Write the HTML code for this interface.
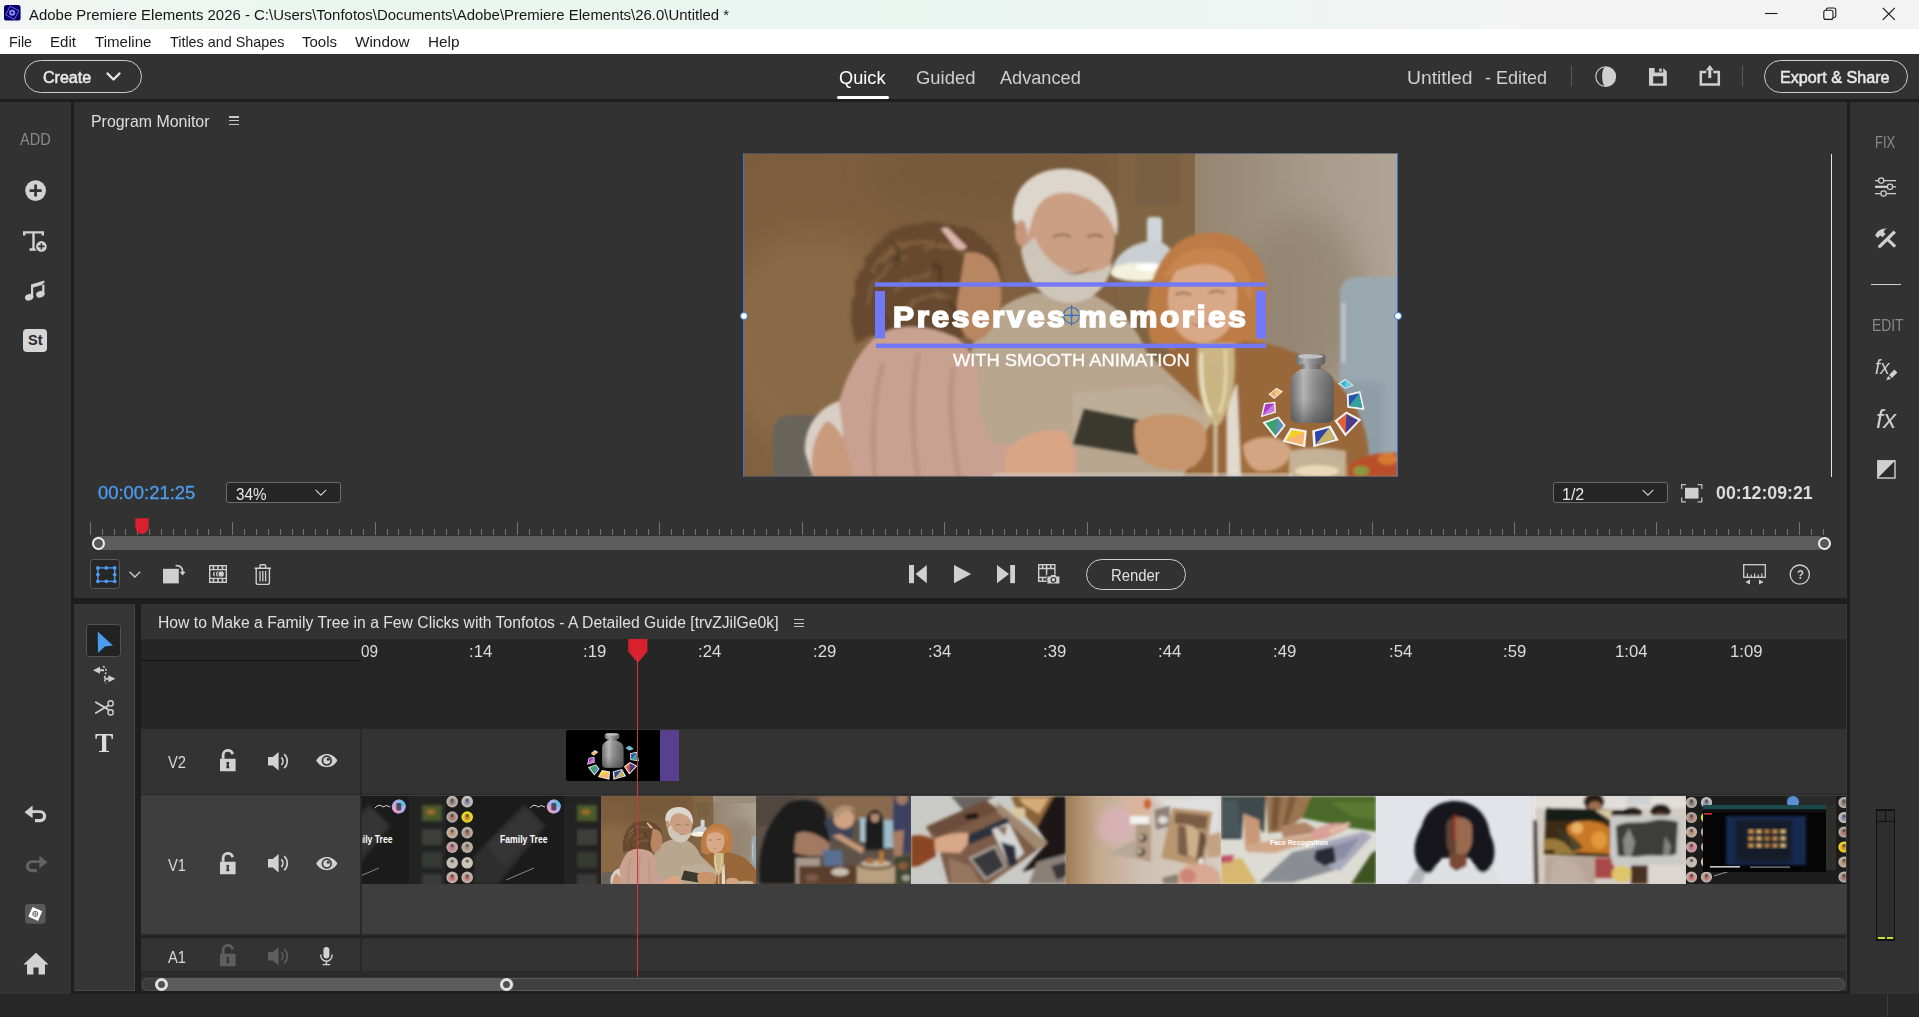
<!DOCTYPE html>
<html><head><meta charset="utf-8"><title>Adobe Premiere Elements 2026</title>
<style>
html,body{margin:0;padding:0;overflow:hidden;}
body{width:1919px;height:1017px;overflow:hidden;background:#323232;position:relative;font-family:"Liberation Sans",sans-serif;}
body div, body svg, body span.t{position:absolute;}
span.t{white-space:pre;transform-origin:0 0;display:block;}
svg{overflow:visible;}
.blur div{position:absolute;}
</style></head><body>
<div style="left:0px;top:0px;width:1919px;height:29px;background:linear-gradient(90deg,#f2f5f3 0%,#ecf6f1 14%,#e9f5f0 42%,#edf5f2 62%,#f3f3f3 80%);"></div>
<div style="left:0px;top:29px;width:1919px;height:25px;background:#ffffff;"></div>
<div style="left:0px;top:54px;width:1919px;height:45px;background:#323232;"></div>
<div style="left:0px;top:99px;width:1919px;height:3px;background:#1e1e1e;"></div>
<div style="left:0px;top:102px;width:71px;height:891px;background:#323232;"></div>
<div style="left:71px;top:102px;width:3px;height:891px;background:#1e1e1e;"></div>
<div style="left:74px;top:102px;width:1773px;height:496px;background:#323232;"></div>
<div style="left:74px;top:598px;width:1773px;height:6px;background:#1e1e1e;"></div>
<div style="left:1847px;top:102px;width:3px;height:891px;background:#1e1e1e;"></div>
<div style="left:1850px;top:102px;width:69px;height:891px;background:#323232;"></div>
<div style="left:74px;top:604px;width:61px;height:387.2px;background:#353535;box-sizing:border-box;border:1px solid #464646;border-top:none;border-left:none;"></div>
<div style="left:135px;top:604px;width:6px;height:389px;background:#1e1e1e;"></div>
<div style="left:141px;top:604px;width:1705px;height:35px;background:#323232;"></div>
<div style="left:141px;top:639px;width:1705px;height:90px;background:#262626;"></div>
<div style="left:141px;top:660px;width:220px;height:1px;background:#161616;"></div>
<div style="left:141px;top:729px;width:1705px;height:64.5px;background:#333333;"></div>
<div style="left:141px;top:793.5px;width:1705px;height:1.6px;background:#282828;"></div>
<div style="left:141px;top:795px;width:1705px;height:139px;background:#3e3e3e;"></div>
<div style="left:141px;top:934px;width:1705px;height:5px;background:#2a2a2a;"></div>
<div style="left:141px;top:936px;width:1705px;height:1px;background:#1f1f1f;"></div>
<div style="left:141px;top:939.5px;width:1705px;height:31.7px;background:#333333;"></div>
<div style="left:141px;top:971.2px;width:1705px;height:6px;background:#2b2b2b;"></div>
<div style="left:360px;top:729px;width:2px;height:242px;background:#282828;"></div>
<div style="left:1846px;top:604px;width:1px;height:389px;background:#3a3a3a;"></div>
<div style="left:142px;top:978px;width:1703px;height:13.3px;background:#404040;border-radius:7px;box-sizing:border-box;border:1px solid #5a5a5a;"></div>
<div style="left:142px;top:978px;width:372px;height:13.3px;background:#5c5c5c;border-radius:7px;"></div>
<div style="left:142px;top:978px;width:18px;height:13.3px;background:#3a3a3a;border-radius:7px 0 0 7px;box-sizing:border-box;border:1px solid #4a4a4a;border-right:none;"></div>
<div style="left:155.0px;top:978.2px;width:13px;height:13px;background:#505050;border-radius:50%;box-sizing:border-box;border:3px solid #e2e2e2;"></div>
<div style="left:500.0px;top:978.2px;width:13px;height:13px;background:#505050;border-radius:50%;box-sizing:border-box;border:3px solid #e2e2e2;"></div>
<div style="left:71px;top:991.2px;width:1779px;height:2.6px;background:#1e1e1e;"></div>
<div style="left:0px;top:993.6px;width:1919px;height:23.4px;background:#272727;"></div>
<div style="left:1887px;top:994px;width:1px;height:23px;background:#3c3c3c;"></div>
<svg style="left:3.75px;top:5px;" width="16.6" height="15.6" viewBox="0 0 16.6 15.6"><rect width="16.6" height="15.6" rx="2.6" fill="#08006c"/><rect x="3.4" y="2.9" width="9.8" height="9.8" fill="none" stroke="#7676ee" stroke-width="0.8" transform="rotate(27 8.3 7.8)"/><circle cx="8.2" cy="7.7" r="3" fill="#8f8ffa"/><path d="M7.3 6.2 L9.9 7.6 L7.4 9.2Z" fill="#08006c"/></svg>
<svg style="left:1765px;top:6px;" width="140" height="16" viewBox="0 0 140 16"><path d="M0 7.5H12.5" stroke="#1a1a1a" stroke-width="1.1"/><rect x="58.8" y="4.2" width="9.2" height="9.2" rx="2" fill="none" stroke="#1a1a1a" stroke-width="1.1"/><path d="M61.3 4.2V3.8a1.8 1.8 0 0 1 1.8-1.8h5.7a2 2 0 0 1 2 2v5.7a1.8 1.8 0 0 1-1.8 1.8H68" fill="none" stroke="#1a1a1a" stroke-width="1.1"/><path d="M117.8 1.8L129.8 13.8M129.8 1.8L117.8 13.8" stroke="#1a1a1a" stroke-width="1.2"/></svg>
<div style="left:24px;top:60px;width:118px;height:33px;background:transparent;box-sizing:border-box;border:1.3px solid #cdcdcd;border-radius:17px;"></div>
<svg style="left:106px;top:72px;" width="16" height="10" viewBox="0 0 16 10"><path d="M1.5 1.5L7.5 7.5L13.5 1.5" fill="none" stroke="#e6e6e6" stroke-width="2.4" stroke-linecap="round" stroke-linejoin="round"/></svg>
<div style="left:837px;top:96px;width:52px;height:3px;background:#ffffff;border-radius:1.5px;"></div>
<div style="left:1571px;top:66px;width:1.3px;height:20px;background:#5a5a5a;"></div>
<div style="left:1742px;top:66px;width:1.3px;height:20px;background:#5a5a5a;"></div>
<svg style="left:1594px;top:65px;" width="24" height="24" viewBox="0 0 24 24"><circle cx="11.7" cy="11.6" r="9.9" fill="none" stroke="#cfcfcf" stroke-width="1.1"/><path d="M11.7 1.7A9.9 9.9 0 0 1 11.7 21.5A3.6 9.9 0 0 1 11.7 1.7Z" fill="#cfcfcf"/></svg>
<svg style="left:1648.8px;top:67.9px;" width="18" height="18" viewBox="0 0 18 18"><path fill-rule="evenodd" d="M0 0H14.2L17.8 3.6V17.8H0Z M5.6 0V4.6H14.2V0Z M4.2 8.2V15.6H14.2V8.2Z" fill="#cfcfcf"/><rect x="10.2" y="0.6" width="2.6" height="3" fill="#cfcfcf"/></svg>
<svg style="left:1699px;top:64px;" width="22" height="22" viewBox="0 0 22 22"><path d="M7.3 8.1H1.8V20.4H19.8V8.1H14.3" fill="none" stroke="#cfcfcf" stroke-width="2.5"/><path d="M10.8 1L14.8 6.3H12.3V14H9.3V6.3H6.8Z" fill="#cfcfcf"/></svg>
<div style="left:1763.8px;top:60px;width:144.4px;height:33px;background:transparent;box-sizing:border-box;border:1.3px solid #cdcdcd;border-radius:17px;"></div>
<div style="left:229px;top:116.4px;width:9.6px;height:1.4px;background:#c8c8c8;"></div>
<div style="left:229px;top:120px;width:9.6px;height:1.4px;background:#c8c8c8;"></div>
<div style="left:229px;top:123.6px;width:9.6px;height:1.4px;background:#c8c8c8;"></div>
<div style="left:794px;top:619px;width:9.6px;height:1.4px;background:#c8c8c8;"></div>
<div style="left:794px;top:622.5px;width:9.6px;height:1.4px;background:#c8c8c8;"></div>
<div style="left:794px;top:626px;width:9.6px;height:1.4px;background:#c8c8c8;"></div>
<svg style="left:25px;top:180px;" width="21" height="21" viewBox="0 0 21 21"><circle cx="10.6" cy="10.6" r="10.4" fill="#d2d2d2"/><path d="M10.6 4.6V16.6M4.6 10.6H16.6" stroke="#323232" stroke-width="2.7"/></svg>
<svg style="left:23px;top:231px;" width="26" height="22" viewBox="0 0 26 22"><path d="M1.2 4.6V1.4H19.8V4.6M10.5 1.4V18.3M6.5 18.5H14.5" fill="none" stroke="#d2d2d2" stroke-width="2.4"/><circle cx="18.4" cy="15.4" r="6.6" fill="#323232"/><circle cx="18.4" cy="15.4" r="5.3" fill="#d2d2d2"/><path d="M18.4 12.2V18.6M15.2 15.4H21.6" stroke="#323232" stroke-width="1.6"/></svg>
<svg style="left:24px;top:279px;" width="22" height="23" viewBox="0 0 22 23"><path d="M7.2 5.2L20.2 1.6V15.6" fill="none" stroke="#d2d2d2" stroke-width="0"/><path d="M7 5.4L20.4 1.4V5.3L9.2 8.6V18.2H7Z M18.2 5V15.2H20.4V3.5Z" fill="#d2d2d2"/><ellipse cx="5.2" cy="18.3" rx="4.3" ry="3.2" transform="rotate(-20 5.2 18.3)" fill="#d2d2d2"/><ellipse cx="16.4" cy="15.2" rx="4.3" ry="3.2" transform="rotate(-20 16.4 15.2)" fill="#d2d2d2"/></svg>
<div style="left:23px;top:329px;width:24px;height:22.7px;background:#d6d6d6;border-radius:4px;"></div>
<svg style="left:24px;top:805px;" width="24" height="18" viewBox="0 0 24 18"><path d="M0.5 7.2L8.6 0.6V5.3H16.2a6 6 0 0 1 0 12H11V14H16a3 3 0 0 0 0-6H8.6V13.2Z" fill="#d2d2d2"/></svg>
<svg style="left:24px;top:855px;transform:scaleX(-1);" width="24" height="18" viewBox="0 0 24 18"><path d="M0.5 7.2L8.6 0.6V5.3H16.2a6 6 0 0 1 0 12H11V14H16a3 3 0 0 0 0-6H8.6V13.2Z" fill="#626262"/></svg>
<svg style="left:25.3px;top:903.6px;" width="20.6" height="19.8" viewBox="0 0 20.6 19.8"><rect width="20.6" height="19.8" rx="3.2" fill="#595959"/><rect x="5" y="4.6" width="10.6" height="10.6" fill="#ffffff" transform="rotate(24 10.3 9.9)"/><circle cx="10.3" cy="9.9" r="2.6" fill="none" stroke="#555" stroke-width="0.9"/><path d="M10.3 7.6V12.2M8 9.9H12.6" stroke="#555" stroke-width="0.7"/></svg>
<svg style="left:23px;top:952px;" width="26" height="24" viewBox="0 0 26 24"><path d="M13 0.8L25.6 12.6H22V22.6H15.6V15.4H10.4V22.6H4V12.6H0.4Z" fill="#d2d2d2"/></svg>
<svg style="left:1874px;top:176px;" width="24" height="22" viewBox="0 0 24 22"><g stroke="#cfcfcf" stroke-width="1.25" fill="#323232"><path d="M1 4.6H22M1 10.8H22M1 17.5H22"/><path d="M1 10.8H13" stroke-width="2.2"/><circle cx="7.2" cy="4.6" r="2.7"/><circle cx="16" cy="10.8" r="2.7"/><circle cx="9.6" cy="17.5" r="2.7"/></g></svg>
<svg style="left:1873px;top:226px;" width="26" height="24" viewBox="0 0 26 24"><path d="M5.6 19.2L20.6 4.4L23 6.8L8 21.6L4 22.8Z" fill="#cfcfcf"/><path d="M4.7 20.4L6.6 22.2L4 22.9Z" fill="#323232"/><path d="M13.6 14.4L15.8 12.2L23.2 19.6L21 21.8Z" fill="#cfcfcf"/><path d="M2.2 9.6C3.8 5.2 8.4 2 14 2.6C11.6 3.6 10.8 4.8 10.8 6.2L12.6 8L9.4 11.2L7.4 9.4L4.6 12Z" fill="#cfcfcf"/></svg>
<div style="left:1870.5px;top:284px;width:30.5px;height:1.2px;background:#cfcfcf;"></div>
<svg style="left:1884px;top:366px;" width="15" height="15" viewBox="0 0 15 15"><path d="M5 9L10.4 3.6L13.4 6.6L8 12Z" fill="#cfcfcf"/><path d="M4.2 9.9L7.1 12.8L1.8 14.6Z" fill="#cfcfcf"/><path d="M2.9 12.9L3.6 13.7L1.8 14.6Z" fill="#323232"/></svg>
<svg style="left:1877px;top:460px;" width="19" height="19" viewBox="0 0 19 19"><rect x="0.8" y="0.8" width="17.2" height="17.2" fill="#2a2a2a" stroke="#cfcfcf" stroke-width="1.4"/><path d="M0.8 0.8H18L0.8 18Z" fill="#cfcfcf"/></svg>
<div style="left:1831px;top:154px;width:1px;height:323px;background:#e4e4e4;"></div>
<div style="left:226px;top:482px;width:115px;height:21.2px;background:#252525;box-sizing:border-box;border:1px solid #6c6c6c;border-radius:3px;"></div>
<svg style="left:315.4px;top:488.6px;" width="13" height="8" viewBox="0 0 13 8"><path d="M0.6 0.8L5.9 6.1L11.2 0.8" fill="none" stroke="#d4d4d4" stroke-width="1.1"/></svg>
<div style="left:1553px;top:482px;width:114.5px;height:21.2px;background:#252525;box-sizing:border-box;border:1px solid #6c6c6c;border-radius:3px;"></div>
<svg style="left:1642.4px;top:488.6px;" width="13" height="8" viewBox="0 0 13 8"><path d="M0.6 0.8L5.9 6.1L11.2 0.8" fill="none" stroke="#d4d4d4" stroke-width="1.1"/></svg>
<svg style="left:1681px;top:483.6px;" width="22" height="19" viewBox="0 0 22 19"><path d="M0.7 5V0.7H5M16.5 0.7H20.8V5M20.8 13.5V17.8H16.5M5 17.8H0.7V13.5" fill="none" stroke="#bdbdbd" stroke-width="1.3"/><rect x="4" y="3.8" width="13.5" height="10.8" fill="#cfcfcf"/></svg>
<svg style="left:0;top:0" width="1919" height="540" fill="#747474" shape-rendering="crispEdges"><rect x="90" y="522" width="1" height="13" /><rect x="102" y="529" width="1" height="6" /><rect x="114" y="529" width="1" height="6" /><rect x="125" y="529" width="1" height="6" /><rect x="137" y="529" width="1" height="6" /><rect x="149" y="529" width="1" height="6" /><rect x="161" y="529" width="1" height="6" /><rect x="173" y="529" width="1" height="6" /><rect x="185" y="529" width="1" height="6" /><rect x="197" y="529" width="1" height="6" /><rect x="208" y="529" width="1" height="6" /><rect x="220" y="529" width="1" height="6" /><rect x="232" y="522" width="1" height="13" /><rect x="244" y="529" width="1" height="6" /><rect x="256" y="529" width="1" height="6" /><rect x="268" y="529" width="1" height="6" /><rect x="280" y="529" width="1" height="6" /><rect x="292" y="529" width="1" height="6" /><rect x="303" y="529" width="1" height="6" /><rect x="315" y="529" width="1" height="6" /><rect x="327" y="529" width="1" height="6" /><rect x="339" y="529" width="1" height="6" /><rect x="351" y="529" width="1" height="6" /><rect x="363" y="529" width="1" height="6" /><rect x="375" y="522" width="1" height="13" /><rect x="387" y="529" width="1" height="6" /><rect x="398" y="529" width="1" height="6" /><rect x="410" y="529" width="1" height="6" /><rect x="422" y="529" width="1" height="6" /><rect x="434" y="529" width="1" height="6" /><rect x="446" y="529" width="1" height="6" /><rect x="458" y="529" width="1" height="6" /><rect x="470" y="529" width="1" height="6" /><rect x="481" y="529" width="1" height="6" /><rect x="493" y="529" width="1" height="6" /><rect x="505" y="529" width="1" height="6" /><rect x="517" y="522" width="1" height="13" /><rect x="529" y="529" width="1" height="6" /><rect x="541" y="529" width="1" height="6" /><rect x="553" y="529" width="1" height="6" /><rect x="565" y="529" width="1" height="6" /><rect x="576" y="529" width="1" height="6" /><rect x="588" y="529" width="1" height="6" /><rect x="600" y="529" width="1" height="6" /><rect x="612" y="529" width="1" height="6" /><rect x="624" y="529" width="1" height="6" /><rect x="636" y="529" width="1" height="6" /><rect x="648" y="529" width="1" height="6" /><rect x="659" y="522" width="1" height="13" /><rect x="671" y="529" width="1" height="6" /><rect x="683" y="529" width="1" height="6" /><rect x="695" y="529" width="1" height="6" /><rect x="707" y="529" width="1" height="6" /><rect x="719" y="529" width="1" height="6" /><rect x="731" y="529" width="1" height="6" /><rect x="743" y="529" width="1" height="6" /><rect x="754" y="529" width="1" height="6" /><rect x="766" y="529" width="1" height="6" /><rect x="778" y="529" width="1" height="6" /><rect x="790" y="529" width="1" height="6" /><rect x="802" y="522" width="1" height="13" /><rect x="814" y="529" width="1" height="6" /><rect x="826" y="529" width="1" height="6" /><rect x="837" y="529" width="1" height="6" /><rect x="849" y="529" width="1" height="6" /><rect x="861" y="529" width="1" height="6" /><rect x="873" y="529" width="1" height="6" /><rect x="885" y="529" width="1" height="6" /><rect x="897" y="529" width="1" height="6" /><rect x="909" y="529" width="1" height="6" /><rect x="921" y="529" width="1" height="6" /><rect x="932" y="529" width="1" height="6" /><rect x="944" y="522" width="1" height="13" /><rect x="956" y="529" width="1" height="6" /><rect x="968" y="529" width="1" height="6" /><rect x="980" y="529" width="1" height="6" /><rect x="992" y="529" width="1" height="6" /><rect x="1004" y="529" width="1" height="6" /><rect x="1016" y="529" width="1" height="6" /><rect x="1027" y="529" width="1" height="6" /><rect x="1039" y="529" width="1" height="6" /><rect x="1051" y="529" width="1" height="6" /><rect x="1063" y="529" width="1" height="6" /><rect x="1075" y="529" width="1" height="6" /><rect x="1087" y="522" width="1" height="13" /><rect x="1099" y="529" width="1" height="6" /><rect x="1110" y="529" width="1" height="6" /><rect x="1122" y="529" width="1" height="6" /><rect x="1134" y="529" width="1" height="6" /><rect x="1146" y="529" width="1" height="6" /><rect x="1158" y="529" width="1" height="6" /><rect x="1170" y="529" width="1" height="6" /><rect x="1182" y="529" width="1" height="6" /><rect x="1194" y="529" width="1" height="6" /><rect x="1205" y="529" width="1" height="6" /><rect x="1217" y="529" width="1" height="6" /><rect x="1229" y="522" width="1" height="13" /><rect x="1241" y="529" width="1" height="6" /><rect x="1253" y="529" width="1" height="6" /><rect x="1265" y="529" width="1" height="6" /><rect x="1277" y="529" width="1" height="6" /><rect x="1288" y="529" width="1" height="6" /><rect x="1300" y="529" width="1" height="6" /><rect x="1312" y="529" width="1" height="6" /><rect x="1324" y="529" width="1" height="6" /><rect x="1336" y="529" width="1" height="6" /><rect x="1348" y="529" width="1" height="6" /><rect x="1360" y="529" width="1" height="6" /><rect x="1372" y="522" width="1" height="13" /><rect x="1383" y="529" width="1" height="6" /><rect x="1395" y="529" width="1" height="6" /><rect x="1407" y="529" width="1" height="6" /><rect x="1419" y="529" width="1" height="6" /><rect x="1431" y="529" width="1" height="6" /><rect x="1443" y="529" width="1" height="6" /><rect x="1455" y="529" width="1" height="6" /><rect x="1466" y="529" width="1" height="6" /><rect x="1478" y="529" width="1" height="6" /><rect x="1490" y="529" width="1" height="6" /><rect x="1502" y="529" width="1" height="6" /><rect x="1514" y="522" width="1" height="13" /><rect x="1526" y="529" width="1" height="6" /><rect x="1538" y="529" width="1" height="6" /><rect x="1550" y="529" width="1" height="6" /><rect x="1561" y="529" width="1" height="6" /><rect x="1573" y="529" width="1" height="6" /><rect x="1585" y="529" width="1" height="6" /><rect x="1597" y="529" width="1" height="6" /><rect x="1609" y="529" width="1" height="6" /><rect x="1621" y="529" width="1" height="6" /><rect x="1633" y="529" width="1" height="6" /><rect x="1645" y="529" width="1" height="6" /><rect x="1656" y="522" width="1" height="13" /><rect x="1668" y="529" width="1" height="6" /><rect x="1680" y="529" width="1" height="6" /><rect x="1692" y="529" width="1" height="6" /><rect x="1704" y="529" width="1" height="6" /><rect x="1716" y="529" width="1" height="6" /><rect x="1728" y="529" width="1" height="6" /><rect x="1739" y="529" width="1" height="6" /><rect x="1751" y="529" width="1" height="6" /><rect x="1763" y="529" width="1" height="6" /><rect x="1775" y="529" width="1" height="6" /><rect x="1787" y="529" width="1" height="6" /><rect x="1799" y="522" width="1" height="13" /><rect x="1811" y="529" width="1" height="6" /><rect x="1823" y="529" width="1" height="6" /></svg>
<div style="left:92px;top:536.4px;width:1733px;height:13.2px;background:#5d5d5d;border-radius:6.6px;"></div>
<div style="left:92.0px;top:536.5px;width:13px;height:13px;background:#585858;border-radius:50%;box-sizing:border-box;border:2.9px solid #efefef;"></div>
<div style="left:1818.0px;top:536.5px;width:13px;height:13px;background:#585858;border-radius:50%;box-sizing:border-box;border:2.9px solid #efefef;"></div>
<svg style="left:135px;top:518px;" width="15" height="17" viewBox="0 0 15 17"><path d="M0.3 0.2H13.7V8.6C13.7 12.6 10.6 16 7 16C3.4 16 0.3 12.6 0.3 8.6Z" fill="#d8202e"/></svg>
<div style="left:90.4px;top:559.3px;width:29.4px;height:29.4px;background:#272727;box-sizing:border-box;border:1px solid #5a5a5a;border-radius:3.5px;"></div>
<svg style="left:95.6px;top:566px;" width="21" height="18" viewBox="0 0 21 18"><rect x="1.9" y="1.9" width="16.8" height="13.4" fill="none" stroke="#4b9cf2" stroke-width="1.3"/><g fill="#4b9cf2"><circle cx="1.9" cy="1.9" r="1.9"/><circle cx="1.9" cy="8.6" r="1.9"/><circle cx="1.9" cy="15.3" r="1.9"/><circle cx="10.3" cy="1.9" r="1.9"/><circle cx="10.3" cy="15.3" r="1.9"/><circle cx="18.7" cy="1.9" r="1.9"/><circle cx="18.7" cy="8.6" r="1.9"/><circle cx="18.7" cy="15.3" r="1.9"/></g></svg>
<svg style="left:129px;top:571px;" width="13" height="8" viewBox="0 0 13 8"><path d="M0.6 0.8L5.9 6L11.2 0.8" fill="none" stroke="#cfcfcf" stroke-width="1.3"/></svg>
<svg style="left:163px;top:563px;" width="24" height="22" viewBox="0 0 24 22"><rect x="0" y="5.8" width="15.8" height="14.6" fill="#cfcfcf"/><path d="M12.6 2.6C17.6 2 20 5.4 19.8 9.6" fill="none" stroke="#cfcfcf" stroke-width="1.8"/><path d="M16.6 8.8H22.6L19.6 12.6Z" fill="#cfcfcf"/></svg>
<svg style="left:209px;top:565px;" width="18" height="18" viewBox="0 0 18 18"><rect x="0.7" y="0.7" width="16.6" height="16.6" fill="none" stroke="#cfcfcf" stroke-width="1.4"/><path d="M0.7 4.6H17.3M0.7 13.4H17.3" stroke="#cfcfcf" stroke-width="1.3"/><path d="M4.50 0.7V4.6M4.50 13.4V17.3" stroke="#cfcfcf" stroke-width="1.6"/><path d="M9.00 0.7V4.6M9.00 13.4V17.3" stroke="#cfcfcf" stroke-width="1.6"/><path d="M13.50 0.7V4.6M13.50 13.4V17.3" stroke="#cfcfcf" stroke-width="1.6"/><circle cx="12.2" cy="9" r="2.7" fill="#cfcfcf"/><path d="M8.6 6.6A3 3 0 0 0 8.6 11.4A4.4 4.4 0 0 1 8.6 6.6Z M5.4 6.9A3 3 0 0 0 5.4 11.1A4.4 4.4 0 0 1 5.4 6.9Z" fill="#cfcfcf" stroke="#cfcfcf" stroke-width="0.8"/></svg>
<svg style="left:254px;top:564px;" width="18" height="22" viewBox="0 0 18 22"><path d="M0.6 4.2H17M6 4V1.6Q6 0.8 6.8 0.8H10.8Q11.6 0.8 11.6 1.6V4" fill="none" stroke="#cfcfcf" stroke-width="1.4"/><path d="M2.2 4.4V18.4Q2.2 20.4 4.2 20.4H13.4Q15.4 20.4 15.4 18.4V4.4" fill="none" stroke="#cfcfcf" stroke-width="1.4"/><path d="M6 7V17.6M8.8 7V17.6M11.6 7V17.6" stroke="#cfcfcf" stroke-width="1.3"/></svg>
<svg style="left:909px;top:565px;" width="19" height="18.4" viewBox="0 0 19 18.4"><rect x="0" y="0" width="5" height="18.2" fill="#cfcfcf"/><path d="M6.6 9.1L17.8 0V18.2Z" fill="#cfcfcf"/></svg>
<svg style="left:953.8px;top:565.4px;" width="18" height="18.4" viewBox="0 0 18 18.4"><path d="M0 0L17.2 9.1L0 18.2Z" fill="#cfcfcf"/></svg>
<svg style="left:996.8px;top:565px;" width="19" height="18.4" viewBox="0 0 19 18.4"><rect x="13.2" y="0" width="4.8" height="18.2" fill="#cfcfcf"/><path d="M12 9.1L0 0V18.2Z" fill="#cfcfcf"/></svg>
<svg style="left:1038px;top:564.3px;" width="22" height="20" viewBox="0 0 22 20"><rect x="0.7" y="0.7" width="16.2" height="16.6" fill="none" stroke="#cfcfcf" stroke-width="1.4"/><path d="M0.7 4.4H17M0.7 13.6H17M4.6 0.7V4.4M8.6 0.7V17.3M12.8 0.7V4.4M4.6 13.6V17.3" stroke="#cfcfcf" stroke-width="1.5"/><rect x="8.4" y="10.6" width="13.6" height="9.6" fill="#323232"/><path d="M9.4 12.4H12.2L13.4 11H17.4L18.6 12.4H21.4V19.6H9.4Z" fill="#cfcfcf"/><circle cx="15.4" cy="15.8" r="2.3" fill="none" stroke="#323232" stroke-width="1.2"/></svg>
<div style="left:1086px;top:558.7px;width:100px;height:31.3px;background:transparent;box-sizing:border-box;border:1.3px solid #cdcdcd;border-radius:16px;"></div>
<svg style="left:1743px;top:564px;" width="24" height="21" viewBox="0 0 24 21"><rect x="0.7" y="0.7" width="21.6" height="12.6" fill="none" stroke="#cfcfcf" stroke-width="1.3"/><path d="M4.4 13V9.6M8.2 13V10.6M11.6 13V9.6M15.2 13V10.6M18.8 13V9.6" stroke="#cfcfcf" stroke-width="1.2"/><path d="M2.4 18L7 15.4V20.6Z M20.6 18L16 15.4V20.6Z" fill="#cfcfcf"/></svg>
<svg style="left:1789px;top:564px;" width="22" height="22" viewBox="0 0 22 22"><circle cx="10.8" cy="10.6" r="9.6" fill="none" stroke="#cfcfcf" stroke-width="1.3"/></svg>
<div style="left:86.4px;top:624.3px;width:34.4px;height:32.5px;background:#222222;box-sizing:border-box;border:1px solid #535353;border-radius:3.5px;"></div>
<svg style="left:96px;top:630px;" width="19" height="24" viewBox="0 0 19 24"><path d="M1.7 1.6L17 15.6L8.8 16.6L2 23Z" fill="#4a9cf0"/></svg>
<svg style="left:92px;top:664px;" width="25" height="21" viewBox="0 0 25 21"><path d="M1 6.3L8 2.8V5.3H12V7.3H8V9.8Z" fill="#cfcfcf"/><path d="M23.4 14.8L16.4 11.3V13.8H12.4V15.8H16.4V18.3Z" fill="#cfcfcf"/><path d="M11 2.4C14 3.6 14.6 7 13.4 10C12.2 13 12.4 17 14 19.6" fill="none" stroke="#cfcfcf" stroke-width="1.5" stroke-dasharray="2 1.6"/></svg>
<svg style="left:95px;top:699px;" width="20" height="18" viewBox="0 0 20 18"><path d="M0.8 3.2L13 10.4M0.8 14L13 6.8" stroke="#cfcfcf" stroke-width="1.8" stroke-linecap="round"/><circle cx="15.6" cy="4.4" r="2.6" fill="none" stroke="#cfcfcf" stroke-width="1.4"/><circle cx="15.6" cy="13.4" r="2.6" fill="none" stroke="#cfcfcf" stroke-width="1.4"/></svg>
<svg style="left:219.8px;top:749px;" width="17" height="23" viewBox="0 0 17 23"><path fill-rule="evenodd" d="M0 9.8H15.6V22.2H0Z M6.2 13.6A1.9 1.9 0 0 1 9.4 13.6L8.8 15.6L9.4 19.2H6.2L6.8 15.6Z" fill="#d2d2d2"/><path d="M3.1 9.8V6.4A4.8 4.8 0 0 1 12.6 5.2" fill="none" stroke="#d2d2d2" stroke-width="2.8"/></svg>
<svg style="left:268.4px;top:751.6px;" width="22" height="19" viewBox="0 0 22 19"><path d="M0 5H4.8L10.6 0V18.4L4.8 13.4H0Z" fill="#d2d2d2"/><path d="M13.4 5.4A5.6 5.6 0 0 1 13.4 13" fill="none" stroke="#d2d2d2" stroke-width="1.7"/><path d="M16.2 2.2A9.6 9.6 0 0 1 16.2 16.2" fill="none" stroke="#d2d2d2" stroke-width="1.7"/></svg>
<svg style="left:316px;top:753px;" width="22" height="16" viewBox="0 0 22 16"><path d="M0.2 7.6C5 -1.2 16.6 -1.2 21.4 7.6C16.6 16.4 5 16.4 0.2 7.6Z" fill="#d2d2d2"/><circle cx="10.8" cy="7.6" r="4.4" fill="none" stroke="#333333" stroke-width="1.7"/><circle cx="12.2" cy="6.2" r="1.5" fill="#333333"/></svg>
<svg style="left:219.8px;top:852px;" width="17" height="23" viewBox="0 0 17 23"><path fill-rule="evenodd" d="M0 9.8H15.6V22.2H0Z M6.2 13.6A1.9 1.9 0 0 1 9.4 13.6L8.8 15.6L9.4 19.2H6.2L6.8 15.6Z" fill="#d2d2d2"/><path d="M3.1 9.8V6.4A4.8 4.8 0 0 1 12.6 5.2" fill="none" stroke="#d2d2d2" stroke-width="2.8"/></svg>
<svg style="left:268.4px;top:854.4px;" width="22" height="19" viewBox="0 0 22 19"><path d="M0 5H4.8L10.6 0V18.4L4.8 13.4H0Z" fill="#d2d2d2"/><path d="M13.4 5.4A5.6 5.6 0 0 1 13.4 13" fill="none" stroke="#d2d2d2" stroke-width="1.7"/><path d="M16.2 2.2A9.6 9.6 0 0 1 16.2 16.2" fill="none" stroke="#d2d2d2" stroke-width="1.7"/></svg>
<svg style="left:316px;top:855.8px;" width="22" height="16" viewBox="0 0 22 16"><path d="M0.2 7.6C5 -1.2 16.6 -1.2 21.4 7.6C16.6 16.4 5 16.4 0.2 7.6Z" fill="#d2d2d2"/><circle cx="10.8" cy="7.6" r="4.4" fill="none" stroke="#3e3e3e" stroke-width="1.7"/><circle cx="12.2" cy="6.2" r="1.5" fill="#3e3e3e"/></svg>
<svg style="left:219.8px;top:944.4px;" width="17" height="23" viewBox="0 0 17 23"><path fill-rule="evenodd" d="M0 9.8H15.6V22.2H0Z M6.2 13.6A1.9 1.9 0 0 1 9.4 13.6L8.8 15.6L9.4 19.2H6.2L6.8 15.6Z" fill="#5e5e5e"/><path d="M3.1 9.8V6.4A4.8 4.8 0 0 1 12.6 5.2" fill="none" stroke="#5e5e5e" stroke-width="2.8"/></svg>
<svg style="left:268.4px;top:947px;" width="22" height="19" viewBox="0 0 22 19"><path d="M0 5H4.8L10.6 0V18.4L4.8 13.4H0Z" fill="#5e5e5e"/><path d="M13.4 5.4A5.6 5.6 0 0 1 13.4 13" fill="none" stroke="#5e5e5e" stroke-width="1.7"/><path d="M16.2 2.2A9.6 9.6 0 0 1 16.2 16.2" fill="none" stroke="#5e5e5e" stroke-width="1.7"/></svg>
<svg style="left:320px;top:947px;" width="13" height="19" viewBox="0 0 13 19"><rect x="3.4" y="0" width="6" height="11.4" rx="3" fill="#d2d2d2"/><path d="M0.8 7.4V8.6A5.6 5.6 0 0 0 12 8.6V7.4M6.4 14.2V17M2.6 17.6H10.2" fill="none" stroke="#d2d2d2" stroke-width="1.4"/></svg>
<div style="left:1876px;top:809.4px;width:19.4px;height:131.2px;background:#121212;"></div>
<div style="left:1877.2px;top:810.6px;width:17px;height:128.8px;background:#2d2d2d;"></div>
<div style="left:1877.2px;top:821px;width:17px;height:1.1px;background:#121212;"></div>
<div style="left:1885px;top:810.6px;width:1.1px;height:11px;background:#121212;"></div>
<div style="left:1877.8px;top:936.6px;width:6.8px;height:2px;background:#d0da3a;"></div>
<div style="left:1886.6px;top:936.6px;width:6.8px;height:2px;background:#d0da3a;"></div>
<svg style="left:743px;top:153px" width="655" height="324" viewBox="0 0 655 324"><defs>
<filter id="b2" x="-20%" y="-20%" width="140%" height="140%"><feGaussianBlur stdDeviation="1.6"/></filter>
<filter id="b4" x="-30%" y="-30%" width="160%" height="160%"><feGaussianBlur stdDeviation="3.5"/></filter>
<filter id="b8" x="-40%" y="-40%" width="180%" height="180%"><feGaussianBlur stdDeviation="7"/></filter>
<filter id="curl" x="-20%" y="-20%" width="140%" height="140%"><feTurbulence type="fractalNoise" baseFrequency="0.11" numOctaves="2" seed="4" result="n"/><feDisplacementMap in="SourceGraphic" in2="n" scale="9" xChannelSelector="R" yChannelSelector="G"/><feGaussianBlur stdDeviation="0.9"/></filter>
<filter id="b16" x="-50%" y="-50%" width="200%" height="200%"><feGaussianBlur stdDeviation="16"/></filter>
<linearGradient id="wl" x1="0" y1="0" x2="1" y2="1"><stop offset="0" stop-color="#7c5e3e"/><stop offset="0.45" stop-color="#7e6040"/><stop offset="1" stop-color="#8f6e4a"/></linearGradient>
<linearGradient id="wr" x1="0" y1="0" x2="1" y2="0"><stop offset="0" stop-color="#948470"/><stop offset="0.6" stop-color="#a89b8a"/><stop offset="1" stop-color="#b0a494"/></linearGradient>
<linearGradient id="wt" x1="0" y1="0" x2="1" y2="0"><stop offset="0" stop-color="#6c6c6c"/><stop offset="0.3" stop-color="#b4b4b4"/><stop offset="0.55" stop-color="#8c8c8c"/><stop offset="1" stop-color="#5e5e5e"/></linearGradient>
<linearGradient id="wsh" x1="0" y1="0" x2="0" y2="1"><stop offset="0" stop-color="#ffffff" stop-opacity="0.08"/><stop offset="0.55" stop-color="#555" stop-opacity="0"/><stop offset="1" stop-color="#3a3a3a" stop-opacity="0.5"/></linearGradient>
<clipPath id="vc"><rect x="0" y="0" width="655" height="324"/></clipPath>
</defs><g clip-path="url(#vc)"><g id="photo"><rect x="0" y="0" width="655" height="324" fill="url(#wl)"/><rect x="375" y="0" width="77" height="324" fill="#806545"/><rect x="392" y="0" width="46" height="52" rx="3" fill="#7a6042" filter="url(#b2)"/><rect x="452" y="0" width="203" height="324" fill="url(#wr)"/><ellipse cx="70" cy="190" rx="100" ry="110" fill="#93714c" opacity="0.6" filter="url(#b16)"/><ellipse cx="250" cy="20" rx="120" ry="40" fill="#6f5538" opacity="0.5" filter="url(#b16)"/><ellipse cx="560" cy="150" rx="60" ry="90" fill="#8a7a68" opacity="0.55" filter="url(#b16)"/><path d="M597 324V142Q597 124 616 124H655V324Z" fill="#9aa8b0" filter="url(#b2)"/><rect x="598" y="150" width="5" height="60" fill="#c4ccd0" opacity="0.7" filter="url(#b2)"/><path d="M597 324V230H640V324Z" fill="#8896a0" opacity="0.6" filter="url(#b4)"/><path d="M30 324V282Q30 262 50 262H92V324Z" fill="#69645b" filter="url(#b2)"/><g filter="url(#b2)"><rect x="404" y="64" width="15" height="34" rx="4" fill="#cfd5d8"/><path d="M368 122C370 100 392 88 411 88C422 88 430 96 432 108L428 126Z" fill="#c9cfd3"/><ellipse cx="398" cy="119" rx="31" ry="9.5" fill="#f3f1dc"/><ellipse cx="406" cy="114" rx="13" ry="4" fill="#ffffff"/></g><g filter="url(#b2)"><path d="M408 190C398 150 410 100 445 84C475 72 512 84 522 120C528 150 524 176 516 196L470 210Z" fill="#bd7b45"/><path d="M425 150C424 120 440 104 462 104C486 104 496 124 494 150C492 174 478 190 458 190C440 190 427 174 425 150Z" fill="#d9a987"/><path d="M420 128C428 100 452 92 476 96C500 100 512 124 508 150C500 130 488 116 470 112C450 110 432 116 420 128Z" fill="#c88650"/><path d="M432 142q8 -4 16 0M466 140q8 -4 16 0" stroke="#7a4a30" stroke-width="1.6" fill="none"/><path d="M444 168q12 8 26 -1q-12 12 -26 1Z" fill="#a8564a"/><path d="M411 324V230C411 204 430 192 452 190L470 215L500 188C540 190 580 205 610 250C625 275 628 300 625 324Z" fill="#98673a"/><path d="M484 324V250L494 230L498 324Z" fill="#e2dacd"/><path d="M500 300C530 290 560 292 590 300L620 324H500Z" fill="#a36f3e"/></g><g filter="url(#b2)"><path d="M225 324V215C228 175 255 150 290 140L345 140C372 150 392 170 404 200L470 262L440 324Z" fill="#b8a68f"/><path d="M330 240L420 232L470 268L440 310L330 290Z" fill="#bfae97"/><path d="M272 70C270 36 292 18 322 18C352 18 378 40 372 80C372 110 360 140 332 148C305 152 284 132 280 100Z" fill="#cb9f83"/><path d="M270 66C268 30 296 14 326 16C356 18 380 42 374 84C368 62 352 44 328 40C304 38 292 50 288 72L282 88Z" fill="#dcd6cd"/><path d="M278 96C282 128 300 150 330 150C352 148 366 130 370 110C356 120 340 122 326 118C310 114 298 100 292 84Z" fill="#cfc6ba"/><path d="M316 116q14 9 32 -2q-14 14 -32 2Z" fill="#8a5a4a"/><path d="M310 84q9 -5 18 0M344 84q8 -4 16 0" stroke="#6a4a38" stroke-width="1.6" fill="none"/><ellipse cx="278" cy="80" rx="6" ry="13" fill="#c6967a"/></g><g filter="url(#b2)"><g filter="url(#curl)"><path d="M112 190C102 150 114 102 150 78C190 58 238 72 256 104C260 130 254 150 244 166L215 188L150 178Z" fill="#664a2f"/><path d="M140 110q18 -26 52 -20M124 150q8 -34 40 -46M160 160q22 -26 46 -14M180 96q24 -10 44 6M128 120q10 -20 30 -30M150 140q14 -18 36 -18" stroke="#8f6e48" stroke-width="4" fill="none" opacity="0.6"/><path d="M150 90q10 10 0 24M190 110q12 8 4 24M136 160q12 6 8 20M206 150q10 8 2 22" stroke="#3e2a18" stroke-width="4" fill="none" opacity="0.5"/></g><path d="M222 100C240 96 258 110 258 136C260 160 250 184 232 188C220 186 214 170 214 150Z" fill="#b98662"/><path d="M198 76q6 -4 10 2l16 16q-6 6 -12 0Z" fill="#dcb4ab"/><path d="M88 324C86 270 100 215 130 186C150 170 180 170 212 184C232 196 238 220 236 260L250 290L335 296V324Z" fill="#c9a191"/><path d="M140 210q-14 50 -8 114M175 200q-10 60 0 124M210 215q-6 50 6 109" stroke="#b88d7d" stroke-width="6" fill="none" opacity="0.6"/><path d="M62 300C60 275 75 255 96 248L100 280L96 324H70Z" fill="#d8cfc5"/><path d="M70 324C66 300 72 280 84 268C96 272 104 290 110 324Z" fill="#c99a7c"/><path d="M262 300C275 282 300 274 322 278C332 290 334 310 328 324H262Z" fill="#d9a585"/></g><g filter="url(#b2)"><path d="M341 256L406 269L396 302L330 291Z" fill="#3a372f"/><path d="M392 270C410 258 440 258 458 270C468 284 464 304 450 314C430 320 410 316 398 306C392 296 390 282 392 270Z" fill="#c8946c"/><path d="M500 292C515 280 540 282 548 296C548 310 535 320 515 318C505 314 500 304 500 292Z" fill="#d4a582"/></g><g filter="url(#b2)"><path d="M455 190H491C494 225 490 255 476 272H470C456 255 452 225 455 190Z" fill="#cdbb88" opacity="0.92"/><path d="M460 200C459 225 462 250 470 262L466 262C458 248 456 222 457 200Z" fill="#f2ead0" opacity="0.9"/><path d="M482 196C484 222 482 246 476 260" stroke="#efe6c4" stroke-width="2.5" fill="none" opacity="0.8"/><rect x="470.5" y="270" width="4" height="54" fill="#d9cdb0" opacity="0.85"/></g><g filter="url(#b2)"><path d="M546 324V298Q575 292 603 298V324Z" fill="#c9b89f" opacity="0.9"/><ellipse cx="574" cy="318" rx="22" ry="6" fill="#ead9b8"/><path d="M606 324V312Q625 298 655 300V324Z" fill="#b8502a"/><ellipse cx="618" cy="318" rx="8" ry="5" fill="#8a9a40"/><ellipse cx="645" cy="306" rx="10" ry="6" fill="#d97a30"/></g><rect x="250" y="320" width="300" height="4" fill="#d8d2c8" opacity="0.6" filter="url(#b2)"/></g><g id="logo"><polygon points="525.4,241.2 533.5,234.7 540.0,238.5 531.3,245.9" fill="#f2f2f0"/><polygon points="527.1,240.9 533.3,236.0 538.2,238.9 531.6,244.5" fill="#f0b060"/><polygon points="531.6,244.5 533.3,236.0 538.2,238.9" fill="#f4c888" opacity="0.9"/><polygon points="521.1,249.9 532.4,248.8 533.0,259.6 517.8,264.2" fill="#f2f2f0"/><polygon points="522.3,251.2 530.9,250.4 531.3,258.6 519.8,262.2" fill="#a83cc8"/><polygon points="519.8,262.2 530.9,250.4 531.3,258.6" fill="#d080e0" opacity="0.9"/><polygon points="519.4,269.3 535.7,263.4 542.7,272.6 532.4,285.6" fill="#f2f2f0"/><polygon points="522.6,270.1 534.9,265.6 540.3,272.6 532.4,282.5" fill="#3aa070"/><polygon points="532.4,282.5 534.9,265.6 540.3,272.6" fill="#6888c0" opacity="0.9"/><polygon points="547.6,274.7 563.8,277.4 562.2,294.2 539.4,288.8" fill="#f2f2f0"/><polygon points="548.9,276.9 561.3,279.0 560.0,291.7 542.8,287.6" fill="#f4d020"/><polygon points="542.8,287.6 561.3,279.0 560.0,291.7" fill="#f6b080" opacity="0.9"/><polygon points="569.2,277.4 587.6,272.6 595.7,287.2 570.3,294.2" fill="#f2f2f0"/><polygon points="571.9,278.7 585.9,275.0 592.1,286.1 572.8,291.5" fill="#2a44a8"/><polygon points="572.8,291.5 585.9,275.0 592.1,286.1" fill="#d8c060" opacity="0.9"/><polygon points="591.4,267.7 603.3,258.5 618.4,266.6 602.2,283.4" fill="#f2f2f0"/><polygon points="594.3,268.0 603.4,261.0 614.9,267.2 602.6,280.0" fill="#e06038"/><polygon points="602.6,280.0 603.4,261.0 614.9,267.2" fill="#383898" opacity="0.9"/><polygon points="603.8,241.2 617.3,238.0 621.6,256.9 604.3,254.7" fill="#f2f2f0"/><polygon points="605.7,242.8 616.0,240.3 619.3,254.7 606.1,253.0" fill="#2850b0"/><polygon points="606.1,253.0 616.0,240.3 619.3,254.7" fill="#38a898" opacity="0.9"/><polygon points="595.1,230.4 602.2,226.1 610.8,232.6 602.2,235.8" fill="#f2f2f0"/><polygon points="596.9,230.6 602.3,227.3 608.8,232.2 602.3,234.7" fill="#38b4d4"/><polygon points="602.3,234.7 602.3,227.3 608.8,232.2" fill="#68cce4" opacity="0.9"/><g><path d="M553 205Q553 201 558 201H577Q582.4 201 582.4 205V208Q582.4 212 576 213H559Q553 212 553 208Z" fill="url(#wt)"/><rect x="558" y="211" width="19.4" height="8" fill="url(#wt)"/><path d="M558 216C553 219 547.6 222 547.6 231V262Q547.6 270 556 270H582Q590.8 270 590.8 262V231C590.8 222 585 219 577.4 216Z" fill="url(#wt)"/><ellipse cx="567.6" cy="203.4" rx="12.5" ry="2.2" fill="#c6c8ca" opacity="0.85"/><path d="M558 216C553 219 547.6 222 547.6 231V262Q547.6 270 556 270H582Q590.8 270 590.8 262V231C590.8 222 585 219 577.4 216Z" fill="url(#wsh)"/></g></g><rect x="132" y="129.3" width="391" height="4.4" fill="#7378f6"/><rect x="133" y="190.6" width="390" height="4.5" fill="#7378f6"/><rect x="132" y="138" width="10" height="47.4" fill="#7378f6"/><rect x="513" y="138" width="10" height="47.4" fill="#7378f6"/><g stroke="#2f6cb4" stroke-width="1.2" fill="none" opacity="0.9"><circle cx="328.6" cy="162.4" r="8"/><path d="M328.6 152V173M318 162.4H339"/></g><circle cx="328.6" cy="162.4" r="1.8" fill="#2f7be0"/></g></svg>
<div style="left:743px;top:153px;width:655px;height:324px;background:transparent;box-sizing:border-box;border:1px solid rgba(45,70,110,0.55);border-left-color:#3b78cc;border-right-color:#3b78cc;"></div>
<div style="left:740px;top:312px;width:8px;height:8px;background:#ffffff;border-radius:50%;box-sizing:border-box;border:1.2px solid #3b78cc;"></div>
<div style="left:1393.5px;top:312px;width:8px;height:8px;background:#ffffff;border-radius:50%;box-sizing:border-box;border:1.2px solid #3b78cc;"></div>
<svg style="left:566px;top:730px;overflow:hidden" width="113" height="51" viewBox="0 0 113 51"><rect width="113" height="51" rx="2.5" fill="#000"/><rect x="94" width="19" height="51" fill="#58408f"/><rect x="94" width="19" height="51" rx="2.5" fill="#58408f"/><use href="#logo" transform="translate(-237.8 -97.3) scale(0.5)"/></svg>
<svg style="left:362px;top:796px;overflow:hidden" width="239" height="88" viewBox="0 0 239 88"><g transform="translate(-71 0)"><rect width="155" height="88" fill="#1b1b1b"/><path d="M28 60L78 8L100 30L52 88H28Z" fill="#2d2d2d" filter="url(#b2)"/><path d="M40 50L80 12L96 30L58 72Z" fill="#383838" opacity="0.7" filter="url(#b2)"/><path d="M60 84L88 72" stroke="#8a8a8a" stroke-width="1"/><rect x="118" y="0" width="37" height="88" fill="#232323"/><rect x="131" y="9" width="20" height="16" fill="#4a5a2a" filter="url(#b2)"/><rect x="131" y="33" width="20" height="16" fill="#3c3c3a" filter="url(#b2)"/><rect x="131" y="56" width="20" height="16" fill="#353a30" filter="url(#b2)"/><rect x="131" y="78" width="20" height="16" fill="#3a3a3a" filter="url(#b2)"/><ellipse cx="140" cy="16" rx="5" ry="3" fill="#b8702a" opacity="0.8" filter="url(#b2)"/><circle cx="6.2" cy="5.6" r="5.8" fill="#b9b2ab"/><circle cx="6.2" cy="6.0" r="2.6" fill="#5a4a40" opacity="0.8" filter="url(#b2)"/><circle cx="6.2" cy="3.9999999999999996" r="1.6" fill="#4a3a30" opacity="0.7"/><circle cx="21.2" cy="5.6" r="5.8" fill="#c8c2ba"/><circle cx="21.2" cy="6.0" r="2.6" fill="#3a5a9a" opacity="0.8" filter="url(#b2)"/><circle cx="21.2" cy="3.9999999999999996" r="1.6" fill="#4a3a30" opacity="0.7"/><circle cx="6.2" cy="21" r="5.8" fill="#b0a8a2"/><circle cx="6.2" cy="21.4" r="2.6" fill="#a84a40" opacity="0.8" filter="url(#b2)"/><circle cx="6.2" cy="19.4" r="1.6" fill="#4a3a30" opacity="0.7"/><circle cx="21.2" cy="21" r="5.8" fill="#e8e02a"/><circle cx="21.2" cy="21.4" r="2.6" fill="#c04030" opacity="0.8" filter="url(#b2)"/><circle cx="21.2" cy="19.4" r="1.6" fill="#4a3a30" opacity="0.7"/><circle cx="6.2" cy="36.6" r="5.8" fill="#bdb5ad"/><circle cx="6.2" cy="37.0" r="2.6" fill="#b86a30" opacity="0.8" filter="url(#b2)"/><circle cx="6.2" cy="35.0" r="1.6" fill="#4a3a30" opacity="0.7"/><circle cx="21.2" cy="36.6" r="5.8" fill="#b8b0aa"/><circle cx="21.2" cy="37.0" r="2.6" fill="#8a3a30" opacity="0.8" filter="url(#b2)"/><circle cx="21.2" cy="35.0" r="1.6" fill="#4a3a30" opacity="0.7"/><circle cx="6.2" cy="51.2" r="5.8" fill="#c0a8a8"/><circle cx="6.2" cy="51.6" r="2.6" fill="#c04a6a" opacity="0.8" filter="url(#b2)"/><circle cx="6.2" cy="49.6" r="1.6" fill="#4a3a30" opacity="0.7"/><circle cx="21.2" cy="51.2" r="5.8" fill="#b8b0a8"/><circle cx="21.2" cy="51.6" r="2.6" fill="#9a7a6a" opacity="0.8" filter="url(#b2)"/><circle cx="21.2" cy="49.6" r="1.6" fill="#4a3a30" opacity="0.7"/><circle cx="6.2" cy="66.8" r="5.8" fill="#c4beb8"/><circle cx="6.2" cy="67.2" r="2.6" fill="#c8b8a8" opacity="0.8" filter="url(#b2)"/><circle cx="6.2" cy="65.2" r="1.6" fill="#4a3a30" opacity="0.7"/><circle cx="21.2" cy="66.8" r="5.8" fill="#c8c2ba"/><circle cx="21.2" cy="67.2" r="2.6" fill="#d8c8b0" opacity="0.8" filter="url(#b2)"/><circle cx="21.2" cy="65.2" r="1.6" fill="#4a3a30" opacity="0.7"/><circle cx="6.2" cy="81.4" r="5.8" fill="#c4b4b0"/><circle cx="6.2" cy="81.80000000000001" r="2.6" fill="#c03030" opacity="0.8" filter="url(#b2)"/><circle cx="6.2" cy="79.80000000000001" r="1.6" fill="#4a3a30" opacity="0.7"/><circle cx="21.2" cy="81.4" r="5.8" fill="#c0b4ae"/><circle cx="21.2" cy="81.80000000000001" r="2.6" fill="#b03a30" opacity="0.8" filter="url(#b2)"/><circle cx="21.2" cy="79.80000000000001" r="1.6" fill="#4a3a30" opacity="0.7"/><circle cx="107.8" cy="10.6" r="7" fill="#b8a8e8"/><path d="M107.8 3.6A7 7 0 0 1 114.8 10.6L107.8 10.6Z" fill="#60c0e8"/><path d="M100.8 10.6A7 7 0 0 0 107.8 17.6L107.8 10.6Z" fill="#e8a0c8"/><rect x="105.3" y="7" width="5" height="7.4" rx="1.4" fill="#4a4a5a"/><path d="M84 12q4 -5 8 -1q3 -3 7 0" stroke="#e8e8e8" stroke-width="0.9" fill="none"/><text x="54" y="46.6" font-family="Liberation Sans" font-weight="700" font-size="11.5" fill="#ffffff" textLength="47.5" lengthAdjust="spacingAndGlyphs">Family Tree</text></g><g transform="translate(84 0)"><rect width="155" height="88" fill="#1b1b1b"/><path d="M28 60L78 8L100 30L52 88H28Z" fill="#2d2d2d" filter="url(#b2)"/><path d="M40 50L80 12L96 30L58 72Z" fill="#383838" opacity="0.7" filter="url(#b2)"/><path d="M60 84L88 72" stroke="#8a8a8a" stroke-width="1"/><rect x="118" y="0" width="37" height="88" fill="#232323"/><rect x="131" y="9" width="20" height="16" fill="#4a5a2a" filter="url(#b2)"/><rect x="131" y="33" width="20" height="16" fill="#3c3c3a" filter="url(#b2)"/><rect x="131" y="56" width="20" height="16" fill="#353a30" filter="url(#b2)"/><rect x="131" y="78" width="20" height="16" fill="#3a3a3a" filter="url(#b2)"/><ellipse cx="140" cy="16" rx="5" ry="3" fill="#b8702a" opacity="0.8" filter="url(#b2)"/><circle cx="6.2" cy="5.6" r="5.8" fill="#b9b2ab"/><circle cx="6.2" cy="6.0" r="2.6" fill="#5a4a40" opacity="0.8" filter="url(#b2)"/><circle cx="6.2" cy="3.9999999999999996" r="1.6" fill="#4a3a30" opacity="0.7"/><circle cx="21.2" cy="5.6" r="5.8" fill="#c8c2ba"/><circle cx="21.2" cy="6.0" r="2.6" fill="#3a5a9a" opacity="0.8" filter="url(#b2)"/><circle cx="21.2" cy="3.9999999999999996" r="1.6" fill="#4a3a30" opacity="0.7"/><circle cx="6.2" cy="21" r="5.8" fill="#b0a8a2"/><circle cx="6.2" cy="21.4" r="2.6" fill="#a84a40" opacity="0.8" filter="url(#b2)"/><circle cx="6.2" cy="19.4" r="1.6" fill="#4a3a30" opacity="0.7"/><circle cx="21.2" cy="21" r="5.8" fill="#e8e02a"/><circle cx="21.2" cy="21.4" r="2.6" fill="#c04030" opacity="0.8" filter="url(#b2)"/><circle cx="21.2" cy="19.4" r="1.6" fill="#4a3a30" opacity="0.7"/><circle cx="6.2" cy="36.6" r="5.8" fill="#bdb5ad"/><circle cx="6.2" cy="37.0" r="2.6" fill="#b86a30" opacity="0.8" filter="url(#b2)"/><circle cx="6.2" cy="35.0" r="1.6" fill="#4a3a30" opacity="0.7"/><circle cx="21.2" cy="36.6" r="5.8" fill="#b8b0aa"/><circle cx="21.2" cy="37.0" r="2.6" fill="#8a3a30" opacity="0.8" filter="url(#b2)"/><circle cx="21.2" cy="35.0" r="1.6" fill="#4a3a30" opacity="0.7"/><circle cx="6.2" cy="51.2" r="5.8" fill="#c0a8a8"/><circle cx="6.2" cy="51.6" r="2.6" fill="#c04a6a" opacity="0.8" filter="url(#b2)"/><circle cx="6.2" cy="49.6" r="1.6" fill="#4a3a30" opacity="0.7"/><circle cx="21.2" cy="51.2" r="5.8" fill="#b8b0a8"/><circle cx="21.2" cy="51.6" r="2.6" fill="#9a7a6a" opacity="0.8" filter="url(#b2)"/><circle cx="21.2" cy="49.6" r="1.6" fill="#4a3a30" opacity="0.7"/><circle cx="6.2" cy="66.8" r="5.8" fill="#c4beb8"/><circle cx="6.2" cy="67.2" r="2.6" fill="#c8b8a8" opacity="0.8" filter="url(#b2)"/><circle cx="6.2" cy="65.2" r="1.6" fill="#4a3a30" opacity="0.7"/><circle cx="21.2" cy="66.8" r="5.8" fill="#c8c2ba"/><circle cx="21.2" cy="67.2" r="2.6" fill="#d8c8b0" opacity="0.8" filter="url(#b2)"/><circle cx="21.2" cy="65.2" r="1.6" fill="#4a3a30" opacity="0.7"/><circle cx="6.2" cy="81.4" r="5.8" fill="#c4b4b0"/><circle cx="6.2" cy="81.80000000000001" r="2.6" fill="#c03030" opacity="0.8" filter="url(#b2)"/><circle cx="6.2" cy="79.80000000000001" r="1.6" fill="#4a3a30" opacity="0.7"/><circle cx="21.2" cy="81.4" r="5.8" fill="#c0b4ae"/><circle cx="21.2" cy="81.80000000000001" r="2.6" fill="#b03a30" opacity="0.8" filter="url(#b2)"/><circle cx="21.2" cy="79.80000000000001" r="1.6" fill="#4a3a30" opacity="0.7"/><circle cx="107.8" cy="10.6" r="7" fill="#b8a8e8"/><path d="M107.8 3.6A7 7 0 0 1 114.8 10.6L107.8 10.6Z" fill="#60c0e8"/><path d="M100.8 10.6A7 7 0 0 0 107.8 17.6L107.8 10.6Z" fill="#e8a0c8"/><rect x="105.3" y="7" width="5" height="7.4" rx="1.4" fill="#4a4a5a"/><path d="M84 12q4 -5 8 -1q3 -3 7 0" stroke="#e8e8e8" stroke-width="0.9" fill="none"/><text x="54" y="46.6" font-family="Liberation Sans" font-weight="700" font-size="11.5" fill="#ffffff" textLength="47.5" lengthAdjust="spacingAndGlyphs">Family Tree</text></g></svg>
<svg style="left:601px;top:796px;overflow:hidden" width="155" height="88" viewBox="0 0 155 88"><rect width="155" height="88" fill="#7a5c3c"/><rect x="92" width="20" height="20" fill="#826646"/><rect x="112" width="43" height="88" fill="#9c8e7c"/><use href="#photo" transform="translate(-7 6.85) scale(0.264)"/></svg>
<svg style="left:756px;top:796px;overflow:hidden" width="155" height="88" viewBox="0 0 155 88"><rect width="155" height="88" fill="#5e5248"/><g filter="url(#b2)"><path d="M60 0H140L150 22L110 26L76 18Z" fill="#8a6a50"/><path d="M0 0H40V30H0Z" fill="#50463f"/><rect x="104" y="22" width="9" height="24" fill="#a8c4d0"/><rect x="127" y="24" width="12" height="28" fill="#9cbcc8"/><path d="M109 54V30C109 20 114 14 119 14C124 14 128 20 128 30V54Z" fill="#1c1a1a"/><ellipse cx="119" cy="21" rx="4.5" ry="5.5" fill="#b08870"/><path d="M113 20C113 12 125 12 125 20L126 30H124L123 18H115L114 30H112Z" fill="#2a1e1a"/><path d="M138 0H155V58L140 56C136 40 136 20 138 0Z" fill="#3a4060"/><path d="M136 36L148 34L146 60L138 62Z" fill="#a87c64"/><ellipse cx="146" cy="3" rx="6" ry="6" fill="#a07860"/><path d="M4 88C0 60 8 28 30 8C44 0 64 4 69 14L74 46L60 62L44 64L40 88Z" fill="#1f1f1f"/><path d="M40 38C50 32 66 40 74 48L72 58C60 62 46 60 38 56Z" fill="#a27a62"/><path d="M40 62H64V88H40Z" fill="#a8988a"/><path d="M66 54H86L88 80H70Z" fill="#5a6e90"/><path d="M68 26C74 20 92 22 97 30L96 42L76 44Z" fill="#3a4258"/><path d="M76 40L84 38L108 52L106 58Z" fill="#c49876"/><ellipse cx="88" cy="23" rx="10.5" ry="10" fill="#cfa282"/><path d="M77 20C78 8 96 6 100 16C94 12 86 14 82 22Z" fill="#b09272"/><path d="M43 70H104V88H43Z" fill="#5a3c2a"/><ellipse cx="84" cy="76" rx="9" ry="4" fill="#c8c0b0"/><ellipse cx="56" cy="82" rx="7" ry="4" fill="#7a5a48"/><path d="M101 70Q120 64 139 70V88H101Z" fill="#b8a080"/><ellipse cx="120" cy="69" rx="18" ry="5" fill="#7a5c44"/><ellipse cx="120" cy="67.5" rx="15" ry="3.4" fill="#c8b8a0"/><path d="M122 68L124 54L128 56L127 68Z" fill="#c07a30"/><ellipse cx="114" cy="65" rx="5" ry="3" fill="#a86a40"/><path d="M139 60H155V88H139Z" fill="#3c4630"/><ellipse cx="147" cy="70" rx="5" ry="4" fill="#8a5a38"/><ellipse cx="150" cy="82" rx="4" ry="3" fill="#a8a098"/></g></svg>
<svg style="left:911px;top:796px;overflow:hidden" width="155" height="88" viewBox="0 0 155 88"><rect width="155" height="88" fill="#c9c9c5"/><g filter="url(#b2)"><path d="M40 0H84L74 6L52 14Z" fill="#6a6460"/><path d="M100 0H146L128 34L104 10Z" fill="#8a6238"/><path d="M108 2H138L128 18L112 8Z" fill="#d4ac78"/><rect x="100" y="12" width="14" height="10" fill="#d8c8a0"/><path d="M143 0H155V62L111 76L136 46.7L126 31.6Z" fill="#1a1412"/><path d="M126 66L155 58V88H118Z" fill="#8a8078"/><path d="M140 70L155 66V80L146 84Z" fill="#3a3438"/><path d="M15 30.7L74.4 4.2L136.7 46.7L78 88H37.6L29 56Z" fill="#7c5c46"/><path d="M86.7 7L136.7 46.7L126 54L84.8 14.6Z" fill="#a08870"/><path d="M15 30.7L74.4 4.2L86.7 14.6L27.2 41Z" fill="#6c4e3a"/><path d="M52.7 19L66 16.5L67.8 22L56 24Z" fill="#1a1614"/><path d="M37.6 62L60 70L70 88H40Z" fill="#94765e"/><path d="M52.7 41L96 21.2L99.9 30.7L58.4 48.6Z" fill="#2a303e"/><path d="M81 33.5L98 27L113 57L98 71Z" fill="#d6d6d6"/><path d="M90 46L104 50L106 68L98 71Z" fill="#2c2e3a"/><path d="M86 32L96 30L94 40Z" fill="#8a6a50"/><path d="M57.4 61.8L84.8 48.6L96 71.3L74.4 84.5Z" fill="#a8a098"/><path d="M61 63L83.6 52L93 70.6L75.4 81.4Z" fill="#38383c"/><path d="M0 40C10 38 20 41 24 45L25 60L8 70L0 71Z" fill="#8a4420"/><path d="M23.4 43C34 38 48 36 57.4 37.3L56.5 48.6L49 57L24.4 56Z" fill="#d8a888"/></g></svg>
<svg style="left:1066px;top:796px;overflow:hidden" width="155" height="88" viewBox="0 0 155 88"><defs><linearGradient id="c5" x1="0" x2="1"><stop offset="0" stop-color="#a07c56"/><stop offset="0.2" stop-color="#c2a88e"/><stop offset="0.5" stop-color="#d0c2b4"/><stop offset="1" stop-color="#d4ccc4"/></linearGradient></defs><rect width="155" height="88" fill="url(#c5)"/><g filter="url(#b4)"><path d="M86 0H155V40L120 30Z" fill="#e0e0e0"/><ellipse cx="50" cy="30" rx="18" ry="19" fill="#d8b2b8" opacity="0.85"/><path d="M56 0H86L84 22L66 26Z" fill="#dab49c"/></g><g filter="url(#b2)"><ellipse cx="81.5" cy="8" rx="3.4" ry="5" fill="#d06030"/><rect x="64" y="20" width="19" height="8" fill="#f2f2f2"/><path d="M43.2 57L69.7 43V62L49 60Z" fill="#b8a898"/><path d="M69.7 28H84.8V66L69.7 62Z" fill="#b29a82"/><circle cx="76.6" cy="42" r="4.2" fill="#4e3e34"/><circle cx="75" cy="56" r="4.2" fill="#4e3e34"/><circle cx="75.2" cy="41.4" r="2.4" fill="#c8b8a8"/><circle cx="73.6" cy="55.4" r="2.4" fill="#c8b8a8"/><path d="M88.6 14L103.7 10V30L90 33.5Z" fill="#8a8078"/><ellipse cx="97" cy="24" rx="5" ry="4" fill="#e0dcd8"/><path d="M141.5 40L155 36V60L141.5 62Z" fill="#c2a282"/><path d="M106.5 11.8L146.2 16L137.7 71.3L95.2 61.8Z" fill="#b89670"/><path d="M110 16L142 20L140 34C134 30 128 36 124 30C118 26 112 30 108 26Z" fill="#7a5c44"/><path d="M112 30C118 28 124 34 122 44L126 62L112 58Z" fill="#6a5040" opacity="0.8"/><path d="M120 30C128 28 134 34 132 44L134 62L122 60Z" fill="#cdb08a"/><path d="M134 36C140 34 142 44 138 52L136 66L130 64Z" fill="#5a4436" opacity="0.85"/><path d="M110 88C108 76 120 66 136 68C148 70 155 74 155 88Z" fill="#d8a892"/><ellipse cx="122" cy="80" rx="8" ry="7" fill="#cc8478"/><ellipse cx="135" cy="65" rx="2.4" ry="3" fill="#f0e8e4"/><path d="M96 82L112 78V88H98Z" fill="#8a8070"/></g></svg>
<svg style="left:1221px;top:796px;overflow:hidden" width="155" height="88" viewBox="0 0 155 88"><rect width="155" height="88" fill="#dcdcd4"/><g filter="url(#b2)"><path d="M71.6 0H155V35.4L126.3 31.6L90.5 24L71.6 20.3Z" fill="#4c6a2a"/><path d="M110 6H155V24L130 20Z" fill="#5a7a32"/><path d="M150 58L155 54V88H130Z" fill="#3e5224"/><path d="M0 0H45L43 37L22.5 17.5L20.6 43H0Z" fill="#3e4a4c"/><path d="M0 4H16L20 40H0Z" fill="#4a565a"/><path d="M22.5 17.5L38.5 24L39.5 52.4L24.4 54.3Z" fill="#c89878"/><path d="M45 0H90.5L81 22L62 35.4L47 37.3Z" fill="#9a7450"/><path d="M52 0H60L56 34H50Z" fill="#6a4c32" opacity="0.7"/><path d="M68 0H76L66 30H62Z" fill="#6a4c32" opacity="0.6"/><path d="M24.4 48.6L100 37.3L109 41L52.7 57L26.3 56Z" fill="#d2a688"/><path d="M60 30L84 26L100 36L62 42Z" fill="#b08468"/><path d="M71.6 56L100 50.5L114 74L71.6 86.4H38.5Z" fill="#8a8e94"/><path d="M94.2 48.6L143.3 35.4L151 40L118.8 75L92.3 64.7Z" fill="#a8a8bc"/><path d="M94.2 54.3L113 50L115 66L104 70.3L93 64Z" fill="#2a2a34"/><path d="M112 50L138 42L124 62L116 64Z" fill="#8c8ca4"/><path d="M90.5 36C100 28 116 26 126 28L124 34L104 43L92 42Z" fill="#d8a098"/><path d="M108 34L128 26L129 29L110 38Z" fill="#e8c0a8"/><path d="M0 63.7L20.6 61.9L35.7 86.4L34 88H0Z" fill="#d8b870"/><path d="M0 60L13 59L11 66L0 67Z" fill="#c05068"/></g><text x="49" y="49.4" font-family="Liberation Sans" font-weight="700" font-size="6.8" fill="#ffffff" textLength="58" lengthAdjust="spacingAndGlyphs">Face Recognition</text></svg>
<svg style="left:1376px;top:796px;overflow:hidden" width="155" height="88" viewBox="0 0 155 88"><rect width="155" height="88" fill="#e2e4ea"/><g filter="url(#b2)"><path d="M31 88L41.4 71.3L67.8 69.4L79 74L90.5 69.4L117 71.3L124.5 88Z" fill="#dddfe1"/><path d="M31 88L41.4 71.3L52 70L46 88Z" fill="#b4b6ba"/><path d="M79 5C100 5 112 20 114 38C120 50 120 62 114 72C110 78 104 78 100 72L94 62H66L56 76C50 80 44 74 40 64C36 52 40 40 46 30C50 14 62 5 79 5Z" fill="#17171b"/><path d="M70.6 30C70.6 18 96 18 96 32V44C96 54 88 62 82 62C76 62 70.6 54 70.6 44Z" fill="#986a50"/><path d="M79.6 18C74 18 70.6 24 70.6 30V44C70.6 54 76 62 80 62Z" fill="#3e2822" opacity="0.6"/><path d="M73.5 58H90.5V70L80 75L73.5 70Z" fill="#784a36"/><rect x="78.6" y="19" width="1.5" height="24" fill="#c83020"/></g></svg>
<svg style="left:1531px;top:796px;overflow:hidden" width="155" height="88" viewBox="0 0 155 88"><rect width="155" height="88" fill="#d2cbc4"/><g filter="url(#b2)"><rect x="0" y="0" width="155" height="12" fill="#e2deda"/><rect x="96" y="0" width="24" height="9" fill="#ccd2d2"/><rect x="0" y="0" width="4.5" height="88" fill="#eae6e2"/><path d="M2 24H5.5L7 88H3Z" fill="#3a302c"/><ellipse cx="63" cy="6" rx="10.5" ry="9" fill="#2a1c14"/><ellipse cx="64" cy="10.5" rx="6.6" ry="5" fill="#a07050"/><ellipse cx="101.6" cy="17" rx="9.4" ry="6" fill="#2a1e18"/><ellipse cx="129.6" cy="15" rx="10" ry="7" fill="#261a14"/><ellipse cx="130" cy="19" rx="7" ry="3" fill="#5a3c2c"/><path d="M14 61H64V88H14Z" fill="#b8a498"/><path d="M22 64C34 60 50 64 56 88H18Z" fill="#c0aea2"/><path d="M64 62H83V82H64Z" fill="#a84848"/><ellipse cx="90.5" cy="78" rx="10" ry="8" fill="#e0c468"/><path d="M100 69.4H117V88H100Z" fill="#4a3024"/><path d="M117 69H155V88H117Z" fill="#dcd6d0"/><rect x="79" y="14.6" width="19" height="5" fill="#0c0c0c"/><path d="M15 11.8L79 13.7V61L13 59Z" fill="#3c2c18"/><path d="M15 11.8L79 13.7V24L14.6 25Z" fill="#141a12"/><path d="M36 30C48 22 70 24 78 32L79 58L44 56C40 48 36 40 36 30Z" fill="#c87828"/><path d="M13.4 44C24 40 36 46 46 58L13 59Z" fill="#9a7a38"/><ellipse cx="46" cy="32" rx="6" ry="6" fill="#e8b060"/><ellipse cx="68" cy="44" rx="8" ry="9" fill="#e09838"/><path d="M64 14L81 13.7L79 24Z" fill="#d8c8a0"/><path d="M24 30C32 34 44 40 52 52L42 56C34 48 28 40 24 30Z" fill="#3a3a28" opacity="0.8"/><rect x="13.4" y="54" width="10" height="3.4" fill="#101010"/><path d="M80 19.4H151.8L150.9 68.5H81Z" fill="#c9c9c7"/><path d="M84.8 30C96 24 110 28 120 25C130 22 140 24 147 26L145.2 58C134 62 124 58 112 60C102 62 94 60 86.7 60Z" fill="#3c3c3a"/><path d="M92 44L98 32L104 46L100 62H94Z" fill="#c9c9c7" opacity="0.55"/><path d="M134 40L140 50L138 60H132Z" fill="#c9c9c7" opacity="0.5"/></g></svg>
<svg style="left:1686px;top:796px;overflow:hidden" width="160" height="88" viewBox="0 0 160 88"><rect width="160" height="88" fill="#1c1c1c"/><circle cx="5.5" cy="6.5" r="5.6" fill="#b9b2ab"/><circle cx="5.5" cy="6.9" r="2.6" fill="#5a4a40" opacity="0.8" filter="url(#b2)"/><circle cx="5.5" cy="4.9" r="1.6" fill="#4a3a30" opacity="0.7"/><circle cx="20.5" cy="6.5" r="5.6" fill="#c8c2ba"/><circle cx="20.5" cy="6.9" r="2.6" fill="#3a5a9a" opacity="0.8" filter="url(#b2)"/><circle cx="20.5" cy="4.9" r="1.6" fill="#4a3a30" opacity="0.7"/><circle cx="5.5" cy="21.5" r="5.6" fill="#b0a8a2"/><circle cx="5.5" cy="21.9" r="2.6" fill="#a84a40" opacity="0.8" filter="url(#b2)"/><circle cx="5.5" cy="19.9" r="1.6" fill="#4a3a30" opacity="0.7"/><circle cx="20.5" cy="21.5" r="5.6" fill="#e8e02a"/><circle cx="20.5" cy="21.9" r="2.6" fill="#c04030" opacity="0.8" filter="url(#b2)"/><circle cx="20.5" cy="19.9" r="1.6" fill="#4a3a30" opacity="0.7"/><circle cx="5.5" cy="36" r="5.6" fill="#bdb5ad"/><circle cx="5.5" cy="36.4" r="2.6" fill="#b86a30" opacity="0.8" filter="url(#b2)"/><circle cx="5.5" cy="34.4" r="1.6" fill="#4a3a30" opacity="0.7"/><circle cx="20.5" cy="36" r="5.6" fill="#b8b0aa"/><circle cx="20.5" cy="36.4" r="2.6" fill="#8a3a30" opacity="0.8" filter="url(#b2)"/><circle cx="20.5" cy="34.4" r="1.6" fill="#4a3a30" opacity="0.7"/><circle cx="5.5" cy="51" r="5.6" fill="#c0a8a8"/><circle cx="5.5" cy="51.4" r="2.6" fill="#c04a6a" opacity="0.8" filter="url(#b2)"/><circle cx="5.5" cy="49.4" r="1.6" fill="#4a3a30" opacity="0.7"/><circle cx="20.5" cy="51" r="5.6" fill="#b8b0a8"/><circle cx="20.5" cy="51.4" r="2.6" fill="#9a7a6a" opacity="0.8" filter="url(#b2)"/><circle cx="20.5" cy="49.4" r="1.6" fill="#4a3a30" opacity="0.7"/><circle cx="5.5" cy="66" r="5.6" fill="#c4beb8"/><circle cx="5.5" cy="66.4" r="2.6" fill="#c8b8a8" opacity="0.8" filter="url(#b2)"/><circle cx="5.5" cy="64.4" r="1.6" fill="#4a3a30" opacity="0.7"/><circle cx="20.5" cy="66" r="5.6" fill="#c8c2ba"/><circle cx="20.5" cy="66.4" r="2.6" fill="#d8c8b0" opacity="0.8" filter="url(#b2)"/><circle cx="20.5" cy="64.4" r="1.6" fill="#4a3a30" opacity="0.7"/><circle cx="5.5" cy="81" r="5.6" fill="#c4b4b0"/><circle cx="5.5" cy="81.4" r="2.6" fill="#c03030" opacity="0.8" filter="url(#b2)"/><circle cx="5.5" cy="79.4" r="1.6" fill="#4a3a30" opacity="0.7"/><circle cx="20.5" cy="81" r="5.6" fill="#c0b4ae"/><circle cx="20.5" cy="81.4" r="2.6" fill="#b03a30" opacity="0.8" filter="url(#b2)"/><circle cx="20.5" cy="79.4" r="1.6" fill="#4a3a30" opacity="0.7"/><circle cx="158" cy="6.5" r="5.6" fill="#b9b2ab"/><circle cx="158" cy="6.9" r="2.6" fill="#5a4a40" opacity="0.8" filter="url(#b2)"/><circle cx="158" cy="4.9" r="1.6" fill="#4a3a30" opacity="0.7"/><circle cx="158" cy="21.5" r="5.6" fill="#c8c2ba"/><circle cx="158" cy="21.9" r="2.6" fill="#3a5a9a" opacity="0.8" filter="url(#b2)"/><circle cx="158" cy="19.9" r="1.6" fill="#4a3a30" opacity="0.7"/><circle cx="158" cy="36" r="5.6" fill="#b0a8a2"/><circle cx="158" cy="36.4" r="2.6" fill="#a84a40" opacity="0.8" filter="url(#b2)"/><circle cx="158" cy="34.4" r="1.6" fill="#4a3a30" opacity="0.7"/><circle cx="158" cy="51" r="5.6" fill="#e8e02a"/><circle cx="158" cy="51.4" r="2.6" fill="#c04030" opacity="0.8" filter="url(#b2)"/><circle cx="158" cy="49.4" r="1.6" fill="#4a3a30" opacity="0.7"/><circle cx="158" cy="66" r="5.6" fill="#bdb5ad"/><circle cx="158" cy="66.4" r="2.6" fill="#b86a30" opacity="0.8" filter="url(#b2)"/><circle cx="158" cy="64.4" r="1.6" fill="#4a3a30" opacity="0.7"/><circle cx="158" cy="81" r="5.6" fill="#b8b0aa"/><circle cx="158" cy="81.4" r="2.6" fill="#8a3a30" opacity="0.8" filter="url(#b2)"/><circle cx="158" cy="79.4" r="1.6" fill="#4a3a30" opacity="0.7"/><path d="M28 80L60 70" stroke="#9a9a9a" stroke-width="1"/><path d="M100 0H150V14H100Z" fill="#2a2a2a"/><circle cx="107" cy="6" r="6" fill="#5a90d8"/><rect x="136" y="10" width="14" height="64" fill="#2e2e2a"/><rect x="17" y="9" width="123" height="67" fill="#050505"/><rect x="17" y="9" width="123" height="4.5" fill="#1c4a4c"/><rect x="17" y="13.5" width="123" height="3" fill="#101010"/><rect x="40" y="20" width="80" height="49" fill="#172c50" filter="url(#b2)"/><rect x="50" y="24" width="56" height="42" fill="#141c2c" filter="url(#b2)"/><rect x="62" y="33" width="6" height="5" fill="#c89048" filter="url(#b2)"/><rect x="70" y="33" width="6" height="5" fill="#d8a860" filter="url(#b2)"/><rect x="78" y="33" width="6" height="5" fill="#b07838" filter="url(#b2)"/><rect x="86" y="33" width="6" height="5" fill="#c08848" filter="url(#b2)"/><rect x="94" y="33" width="6" height="5" fill="#d8b070" filter="url(#b2)"/><rect x="62" y="40" width="6" height="5" fill="#c89048" filter="url(#b2)"/><rect x="70" y="40" width="6" height="5" fill="#d8a860" filter="url(#b2)"/><rect x="78" y="40" width="6" height="5" fill="#b07838" filter="url(#b2)"/><rect x="86" y="40" width="6" height="5" fill="#c08848" filter="url(#b2)"/><rect x="94" y="40" width="6" height="5" fill="#d8b070" filter="url(#b2)"/><rect x="62" y="47" width="6" height="5" fill="#c89048" filter="url(#b2)"/><rect x="70" y="47" width="6" height="5" fill="#d8a860" filter="url(#b2)"/><rect x="78" y="47" width="6" height="5" fill="#b07838" filter="url(#b2)"/><rect x="86" y="47" width="6" height="5" fill="#c08848" filter="url(#b2)"/><rect x="94" y="47" width="6" height="5" fill="#d8b070" filter="url(#b2)"/><rect x="24" y="70" width="30" height="1.6" fill="#c8c8c8"/><rect x="64" y="70.5" width="40" height="1.2" fill="#8a8a8a"/><rect x="18" y="17" width="8" height="1.6" fill="#d03030"/></svg>
<svg style="left:627.7px;top:638.7px;" width="20" height="24" viewBox="0 0 20 24"><path d="M0.2 0H19.4V12.6L10.6 23H9L0.2 12.6Z" fill="#d8202e"/></svg>
<div style="left:636.5px;top:655px;width:1.9px;height:322px;background:#cf3640;"></div>
<span class="t" style="left:28.9px;top:6.83px;font-size:15.2px;line-height:15.2px;color:#161616;font-weight:400;font-style:normal;font-family:'Liberation Sans';transform:scaleX(0.9838);">Adobe Premiere Elements 2026 - C:\Users\Tonfotos\Documents\Adobe\Premiere Elements\26.0\Untitled *</span>
<span class="t" style="left:9px;top:34.30px;font-size:15px;line-height:15px;color:#1b1b1b;font-weight:400;font-style:normal;font-family:'Liberation Sans';transform:scaleX(0.9515);">File</span>
<span class="t" style="left:50px;top:34.30px;font-size:15px;line-height:15px;color:#1b1b1b;font-weight:400;font-style:normal;font-family:'Liberation Sans';transform:scaleX(1.0054);">Edit</span>
<span class="t" style="left:94.5px;top:34.30px;font-size:15px;line-height:15px;color:#1b1b1b;font-weight:400;font-style:normal;font-family:'Liberation Sans';transform:scaleX(1.0064);">Timeline</span>
<span class="t" style="left:169.5px;top:34.30px;font-size:15px;line-height:15px;color:#1b1b1b;font-weight:400;font-style:normal;font-family:'Liberation Sans';transform:scaleX(0.9579);">Titles and Shapes</span>
<span class="t" style="left:302px;top:34.30px;font-size:15px;line-height:15px;color:#1b1b1b;font-weight:400;font-style:normal;font-family:'Liberation Sans';transform:scaleX(0.9991);">Tools</span>
<span class="t" style="left:355px;top:34.30px;font-size:15px;line-height:15px;color:#1b1b1b;font-weight:400;font-style:normal;font-family:'Liberation Sans';transform:scaleX(1.0214);">Window</span>
<span class="t" style="left:428px;top:34.30px;font-size:15px;line-height:15px;color:#1b1b1b;font-weight:400;font-style:normal;font-family:'Liberation Sans';transform:scaleX(1.0208);">Help</span>
<span class="t" style="left:43px;top:69.98px;font-size:16.8px;line-height:16.8px;color:#e8e8e8;font-weight:400;font-style:normal;font-family:'Liberation Sans';transform:scaleX(0.9568);-webkit-text-stroke:0.55px #e8e8e8;">Create</span>
<span class="t" style="left:839px;top:69.04px;font-size:18.5px;line-height:18.5px;color:#ffffff;font-weight:400;font-style:normal;font-family:'Liberation Sans';transform:scaleX(0.9832);">Quick</span>
<span class="t" style="left:915.5px;top:69.04px;font-size:18.5px;line-height:18.5px;color:#cfcfcf;font-weight:400;font-style:normal;font-family:'Liberation Sans';transform:scaleX(0.9974);">Guided</span>
<span class="t" style="left:1000px;top:69.04px;font-size:18.5px;line-height:18.5px;color:#cfcfcf;font-weight:400;font-style:normal;font-family:'Liberation Sans';transform:scaleX(0.9812);">Advanced</span>
<span class="t" style="left:1407px;top:69.04px;font-size:18.5px;line-height:18.5px;color:#cfcfcf;font-weight:400;font-style:normal;font-family:'Liberation Sans';transform:scaleX(1.0441);">Untitled</span>
<span class="t" style="left:1485px;top:69.04px;font-size:18.5px;line-height:18.5px;color:#cfcfcf;font-weight:400;font-style:normal;font-family:'Liberation Sans';transform:scaleX(0.9723);">- Edited</span>
<span class="t" style="left:1780.2px;top:69.98px;font-size:16.8px;line-height:16.8px;color:#e8e8e8;font-weight:400;font-style:normal;font-family:'Liberation Sans';transform:scaleX(0.9630);-webkit-text-stroke:0.55px #e8e8e8;">Export &amp; Share</span>
<span class="t" style="left:90.5px;top:113.20px;font-size:16.3px;line-height:16.3px;color:#dedede;font-weight:400;font-style:normal;font-family:'Liberation Sans';transform:scaleX(0.9773);">Program Monitor</span>
<span class="t" style="left:20.3px;top:132.46px;font-size:16px;line-height:16px;color:#8a8a8a;font-weight:400;font-style:normal;font-family:'Liberation Sans';transform:scaleX(0.9088);">ADD</span>
<span class="t" style="left:1875.0px;top:135.26px;font-size:16px;line-height:16px;color:#8a8a8a;font-weight:400;font-style:normal;font-family:'Liberation Sans';transform:scaleX(0.8116);">FIX</span>
<span class="t" style="left:1872px;top:318.46px;font-size:16px;line-height:16px;color:#8a8a8a;font-weight:400;font-style:normal;font-family:'Liberation Sans';transform:scaleX(0.8641);">EDIT</span>
<span class="t" style="left:98px;top:485.13px;font-size:17.8px;line-height:17.8px;color:#4a9df0;font-weight:400;font-style:normal;font-family:'Liberation Sans';transform:scaleX(1.0358);-webkit-text-stroke:0.3px #4a9df0;">00:00:21:25</span>
<span class="t" style="left:235.5px;top:485.91px;font-size:17px;line-height:17px;color:#e8e8e8;font-weight:400;font-style:normal;font-family:'Liberation Sans';transform:scaleX(0.8962);">34%</span>
<span class="t" style="left:1561.75px;top:485.91px;font-size:17px;line-height:17px;color:#e8e8e8;font-weight:400;font-style:normal;font-family:'Liberation Sans';transform:scaleX(0.9412);">1/2</span>
<span class="t" style="left:1715.75px;top:485.30px;font-size:17.6px;line-height:17.6px;color:#dcdcdc;font-weight:700;font-style:normal;font-family:'Liberation Sans';transform:scaleX(1.0093);">00:12:09:21</span>
<span class="t" style="left:1110.6px;top:568.46px;font-size:16px;line-height:16px;color:#e0e0e0;font-weight:400;font-style:normal;font-family:'Liberation Sans';transform:scaleX(0.9298);">Render</span>
<span class="t" style="left:157.5px;top:615.46px;font-size:16px;line-height:16px;color:#e0e0e0;font-weight:400;font-style:normal;font-family:'Liberation Sans';transform:scaleX(0.9819);">How to Make a Family Tree in a Few Clicks with Tonfotos - A Detailed Guide [trvZJilGe0k]</span>
<span class="t" style="left:361px;top:643.03px;font-size:16.5px;line-height:16.5px;color:#dcdcdc;font-weight:400;font-style:normal;font-family:'Liberation Sans';transform:scaleX(0.9260);">09</span>
<span class="t" style="left:468.7px;top:643.03px;font-size:16.5px;line-height:16.5px;color:#dcdcdc;font-weight:400;font-style:normal;font-family:'Liberation Sans';transform:scaleX(1.0158);">:14</span>
<span class="t" style="left:583.4px;top:643.03px;font-size:16.5px;line-height:16.5px;color:#dcdcdc;font-weight:400;font-style:normal;font-family:'Liberation Sans';transform:scaleX(1.0158);">:19</span>
<span class="t" style="left:697.9px;top:643.03px;font-size:16.5px;line-height:16.5px;color:#dcdcdc;font-weight:400;font-style:normal;font-family:'Liberation Sans';transform:scaleX(1.0158);">:24</span>
<span class="t" style="left:813.2px;top:643.03px;font-size:16.5px;line-height:16.5px;color:#dcdcdc;font-weight:400;font-style:normal;font-family:'Liberation Sans';transform:scaleX(1.0158);">:29</span>
<span class="t" style="left:928.3px;top:643.03px;font-size:16.5px;line-height:16.5px;color:#dcdcdc;font-weight:400;font-style:normal;font-family:'Liberation Sans';transform:scaleX(1.0158);">:34</span>
<span class="t" style="left:1043px;top:643.03px;font-size:16.5px;line-height:16.5px;color:#dcdcdc;font-weight:400;font-style:normal;font-family:'Liberation Sans';transform:scaleX(1.0158);">:39</span>
<span class="t" style="left:1158.4px;top:643.03px;font-size:16.5px;line-height:16.5px;color:#dcdcdc;font-weight:400;font-style:normal;font-family:'Liberation Sans';transform:scaleX(1.0158);">:44</span>
<span class="t" style="left:1273px;top:643.03px;font-size:16.5px;line-height:16.5px;color:#dcdcdc;font-weight:400;font-style:normal;font-family:'Liberation Sans';transform:scaleX(1.0158);">:49</span>
<span class="t" style="left:1388.7px;top:643.03px;font-size:16.5px;line-height:16.5px;color:#dcdcdc;font-weight:400;font-style:normal;font-family:'Liberation Sans';transform:scaleX(1.0158);">:54</span>
<span class="t" style="left:1503px;top:643.03px;font-size:16.5px;line-height:16.5px;color:#dcdcdc;font-weight:400;font-style:normal;font-family:'Liberation Sans';transform:scaleX(1.0158);">:59</span>
<span class="t" style="left:1615px;top:643.03px;font-size:16.5px;line-height:16.5px;color:#dcdcdc;font-weight:400;font-style:normal;font-family:'Liberation Sans';transform:scaleX(1.0117);">1:04</span>
<span class="t" style="left:1730px;top:643.03px;font-size:16.5px;line-height:16.5px;color:#dcdcdc;font-weight:400;font-style:normal;font-family:'Liberation Sans';transform:scaleX(1.0117);">1:09</span>
<span class="t" style="left:168px;top:753.73px;font-size:16.5px;line-height:16.5px;color:#d8d8d8;font-weight:400;font-style:normal;font-family:'Liberation Sans';transform:scaleX(0.8916);">V2</span>
<span class="t" style="left:168px;top:856.78px;font-size:16.5px;line-height:16.5px;color:#d8d8d8;font-weight:400;font-style:normal;font-family:'Liberation Sans';transform:scaleX(0.8916);">V1</span>
<span class="t" style="left:168px;top:948.63px;font-size:16.5px;line-height:16.5px;color:#d8d8d8;font-weight:400;font-style:normal;font-family:'Liberation Sans';transform:scaleX(0.8916);">A1</span>
<span class="t" style="left:28px;top:333.13px;font-size:14.5px;line-height:14.5px;color:#2a2a2a;font-weight:700;font-style:normal;font-family:'Liberation Sans';transform:scaleX(1.0000);">St</span>
<span class="t" style="left:1875.2px;top:356.67px;font-size:20px;line-height:20px;color:#cfcfcf;font-weight:400;font-style:italic;font-family:'Liberation Sans';transform:scaleX(0.9253);">fx</span>
<span class="t" style="left:1876px;top:405.57px;font-size:26.5px;line-height:26.5px;color:#cfcfcf;font-weight:400;font-style:italic;font-family:'Liberation Sans';transform:scaleX(0.9697);">fx</span>
<span class="t" style="left:1796.6px;top:568.40px;font-size:13px;line-height:13px;color:#cfcfcf;font-weight:700;font-style:normal;font-family:'Liberation Sans';transform:scaleX(0.8802);">?</span>
<span class="t" style="left:95px;top:729.90px;font-size:26.5px;line-height:26.5px;color:#dcdcdc;font-weight:700;font-style:normal;font-family:'Liberation Serif';transform:scaleX(1.0346);">T</span>
<span class="t" style="left:892.7px;top:301.83px;font-size:29.5px;line-height:29.5px;color:#ffffff;font-weight:700;font-style:normal;font-family:'Liberation Sans';transform:scaleX(1.0706);-webkit-text-stroke:1.7px #ffffff;letter-spacing:2.4px;">Preserves memories</span>
<span class="t" style="left:952.6px;top:352.06px;font-size:17.3px;line-height:17.3px;color:#ffffff;font-weight:400;font-style:normal;font-family:'Liberation Sans';transform:scaleX(1.0597);-webkit-text-stroke:0.3px #ffffff;">WITH SMOOTH ANIMATION</span>
</body></html>
